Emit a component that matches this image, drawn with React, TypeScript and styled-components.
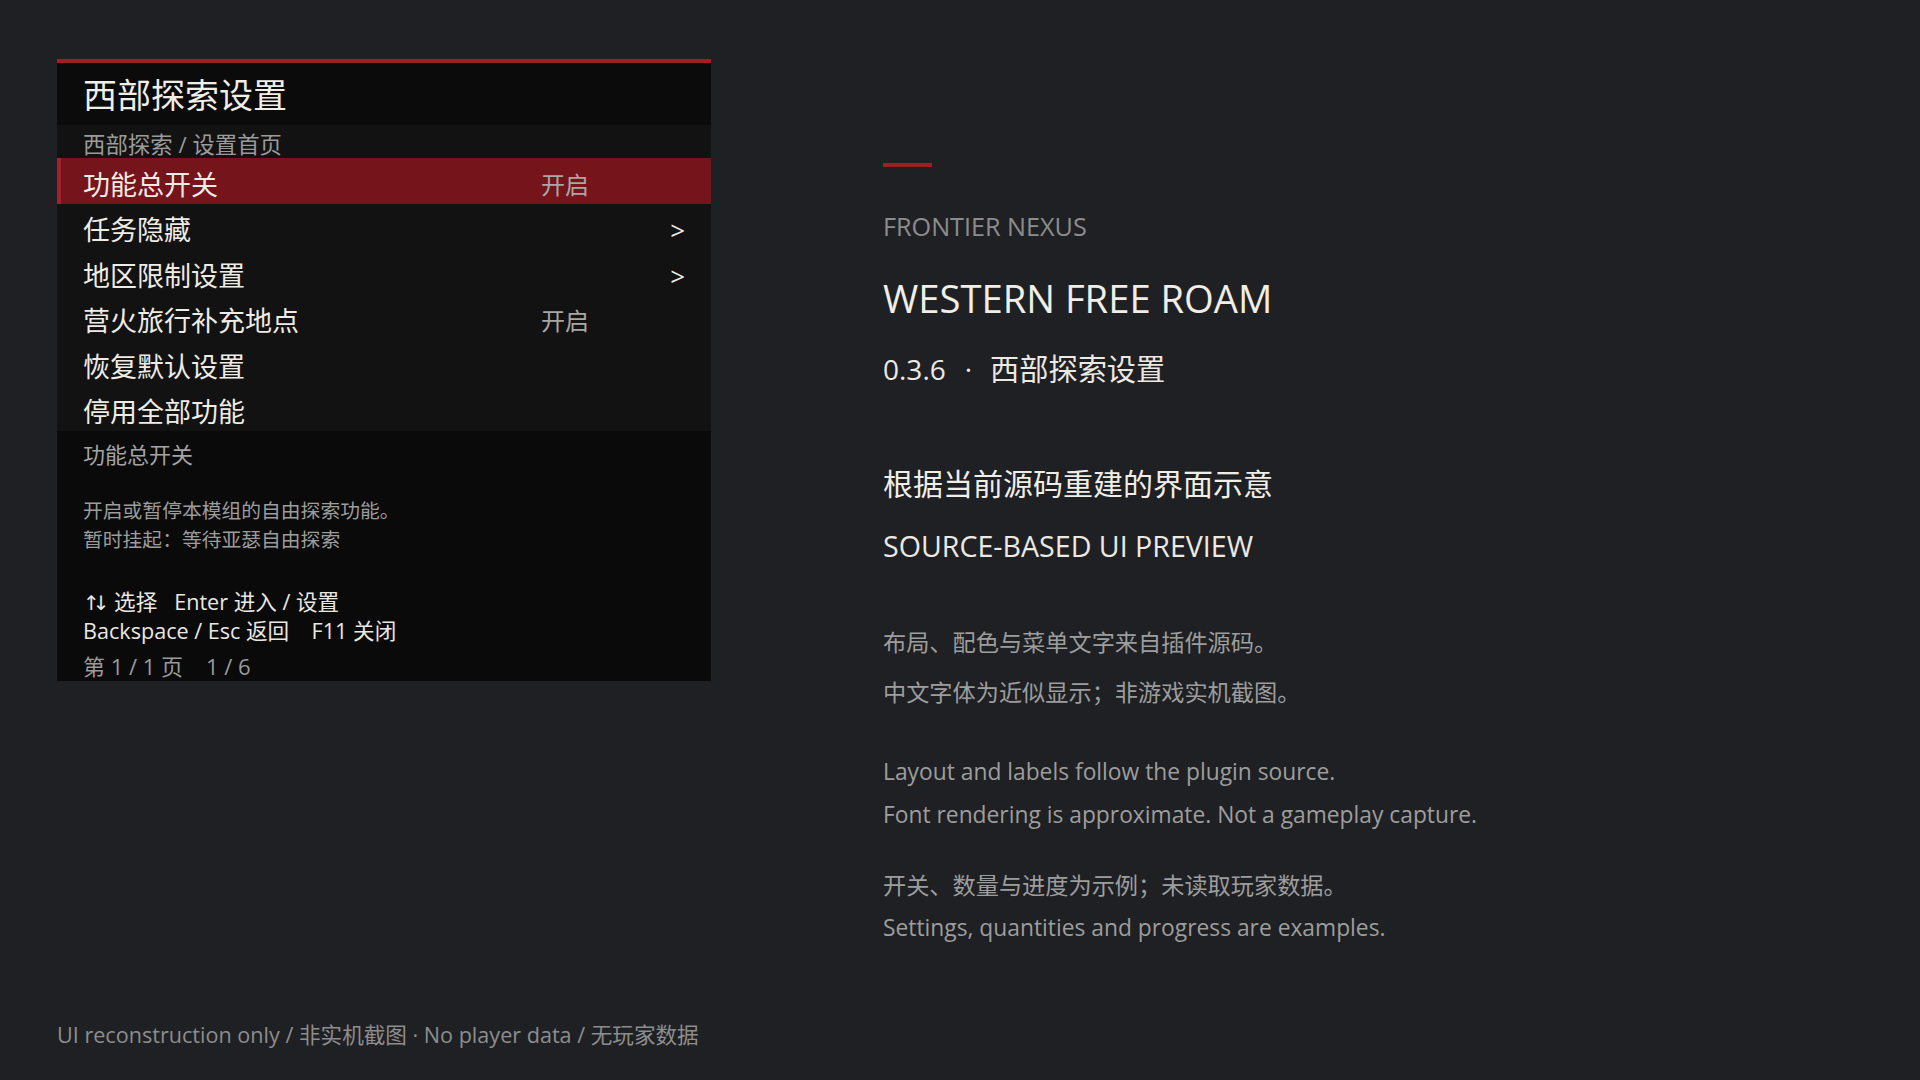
import React from "react";
import styled, { createGlobalStyle } from "styled-components";

const GlobalStyle = createGlobalStyle`
  html, body {
    margin: 0;
    padding: 0;
    background: #1f2023;
  }
  body {
    font-family: "Open Sans", "Noto Sans CJK SC", sans-serif;
    color: #ece9e2;
  }
  * { box-sizing: border-box; }
`;

interface MenuItem {
  label: string;
  value?: string;
  submenu?: boolean;
}

const items: MenuItem[] = [
  { label: "功能总开关", value: "开启" },
  { label: "任务隐藏", submenu: true },
  { label: "地区限制设置", submenu: true },
  { label: "营火旅行补充地点", value: "开启" },
  { label: "恢复默认设置" },
  { label: "停用全部功能" },
];

export default function App() {
  const selected = 0;
  return (
    <>
      <GlobalStyle />
      <Page>
        <Main>
          <Panel>
            <PanelTitle>西部探索设置</PanelTitle>
            <Breadcrumb>西部探索 / 设置首页</Breadcrumb>
            <Menu>
              {items.map((item, i) => (
                <Row key={item.label} $active={i === selected}>
                  <RowLabel>{item.label}</RowLabel>
                  <RowValue>{item.value}</RowValue>
                  <Chevron>{item.submenu ? ">" : ""}</Chevron>
                </Row>
              ))}
            </Menu>
            <Details>
              <DetailTitle>功能总开关</DetailTitle>
              <DetailText>
                <div>开启或暂停本模组的自由探索功能。</div>
                <div>暂时挂起：等待亚瑟自由探索</div>
              </DetailText>
              <Help>
                <div>
                  <Arrows>↑↓</Arrows>
                  {" 选择   Enter 进入 / 设置"}
                </div>
                <div>{"Backspace / Esc 返回    F11 关闭"}</div>
              </Help>
              <Pager>{"第 1 / 1 页    1 / 6"}</Pager>
            </Details>
          </Panel>

          <Info>
            <Accent />
            <Eyebrow>FRONTIER NEXUS</Eyebrow>
            <Headline>WESTERN FREE ROAM</Headline>
            <Version>
              0.3.6<Dot>·</Dot>
              <VersionName>西部探索设置</VersionName>
            </Version>
            <Subhead>根据当前源码重建的界面示意</Subhead>
            <SubheadLatin>SOURCE-BASED UI PREVIEW</SubheadLatin>
            <NoteGroup $gap={18} $top={60}>
              <Note $cjk>布局、配色与菜单文字来自插件源码。</Note>
              <Note $cjk>中文字体为近似显示；非游戏实机截图。</Note>
            </NoteGroup>
            <NoteGroup $gap={11} $top={48}>
              <Note>Layout and labels follow the plugin source.</Note>
              <Note>Font rendering is approximate. Not a gameplay capture.</Note>
            </NoteGroup>
            <NoteGroup $gap={11} $top={38}>
              <Note $cjk>开关、数量与进度为示例；未读取玩家数据。</Note>
              <Note>Settings, quantities and progress are examples.</Note>
            </NoteGroup>
          </Info>
        </Main>
        <Footer>UI reconstruction only / 非实机截图 · No player data / 无玩家数据</Footer>
      </Page>
    </>
  );
}

const Page = styled.div`
  width: 1920px;
  height: 1080px;
  display: flex;
  flex-direction: column;
  padding: 59px 0 30px 57px;
`;

const Main = styled.div`
  display: flex;
  align-items: flex-start;
  gap: 172px;
`;

const Panel = styled.section`
  width: 654px;
  border-top: 4px solid #a11d23;
  background: #121212;
  display: flex;
  flex-direction: column;
`;

const PanelTitle = styled.h1`
  margin: 0;
  height: 62px;
  padding: 3px 0 0 26px;
  background: #0b0b0b;
  font-family: "Open Sans", "Noto Sans CJK SC", sans-serif;
  font-weight: 400;
  font-size: 34px;
  line-height: 59px;
  color: #f1eee7;
`;

const Breadcrumb = styled.div`
  height: 33px;
  padding: 7px 0 0 26px;
  font-size: 22.4px;
  line-height: 26px;
  color: #9b9b9b;
`;

const Menu = styled.div`
  display: flex;
  flex-direction: column;
`;

const Row = styled.div<{ $active?: boolean }>`
  height: 45.5px;
  display: flex;
  align-items: center;
  padding: 8px 26px 0 22px;
  border-left: 4px solid ${(p) => (p.$active ? "#a3212a" : "transparent")};
  background: ${(p) => (p.$active ? "#75141b" : "transparent")};
  color: #efece5;
`;

const RowLabel = styled.span`
  width: 458px;
  font-size: 27px;
  line-height: 36px;
`;

const RowValue = styled.span`
  flex: 1;
  font-size: 24px;
  line-height: 36px;
  color: #a9a7a3;
`;

const Chevron = styled.span`
  font-size: 26px;
  line-height: 36px;
  color: #efece5;
`;

const Details = styled.div`
  background: #0a0a0a;
  padding: 8px 0 1px 26px;
  display: flex;
  flex-direction: column;
`;

const DetailTitle = styled.div`
  font-size: 22px;
  line-height: 30px;
  color: #a4a4a4;
`;

const DetailText = styled.div`
  margin-top: 27px;
  font-size: 19.8px;
  line-height: 29px;
  color: #9c9c9c;
`;

const Help = styled.div`
  margin-top: 34px;
  font-size: 21.6px;
  line-height: 28px;
  color: #e9e7e1;
  white-space: pre;
`;

const Arrows = styled.span`
  display: inline-block;
  font-family: "DejaVu Sans", sans-serif;
  font-size: 20px;
  letter-spacing: -7px;
  margin-right: 6px;
`;

const Pager = styled.div`
  margin-top: 7px;
  font-size: 22px;
  line-height: 28px;
  color: #9a9a9a;
  white-space: pre;
`;

const Info = styled.div`
  display: flex;
  flex-direction: column;
  align-items: flex-start;
`;

const Accent = styled.div`
  margin-top: 104px;
  width: 49px;
  height: 4px;
  background: #a11d23;
`;

const Eyebrow = styled.div`
  margin-top: 42px;
  font-size: 25.2px;
  line-height: 34px;
  color: #8c8c8c;
`;

const Headline = styled.h2`
  margin: 29px 0 0;
  font-weight: 400;
  font-size: 38.2px;
  line-height: 52px;
  color: #f1eee7;
`;

const Version = styled.div`
  margin-top: 25px;
  display: flex;
  align-items: baseline;
  font-size: 28px;
  line-height: 40px;
  color: #ece9e2;
`;

const Dot = styled.span`
  margin: 0 18px 0 19px;
`;

const VersionName = styled.span`
  font-size: 29.2px;
`;

const Subhead = styled.div`
  margin-top: 74px;
  font-size: 30px;
  line-height: 42px;
  color: #f1eee7;
`;

const SubheadLatin = styled.div`
  margin-top: 21px;
  font-size: 28.6px;
  line-height: 40px;
  color: #ece9e2;
`;

const NoteGroup = styled.div<{ $gap: number; $top: number }>`
  display: flex;
  flex-direction: column;
  gap: ${(p) => p.$gap}px;
  margin-top: ${(p) => p.$top}px;
`;

const Note = styled.div<{ $cjk?: boolean }>`
  font-size: ${(p) => (p.$cjk ? "23.2px" : "22.8px")};
  line-height: 32px;
  color: #9d9d9d;
`;

const Footer = styled.footer`
  margin-top: auto;
  font-size: 21.6px;
  line-height: 30px;
  color: #8d8d8d;
`;
